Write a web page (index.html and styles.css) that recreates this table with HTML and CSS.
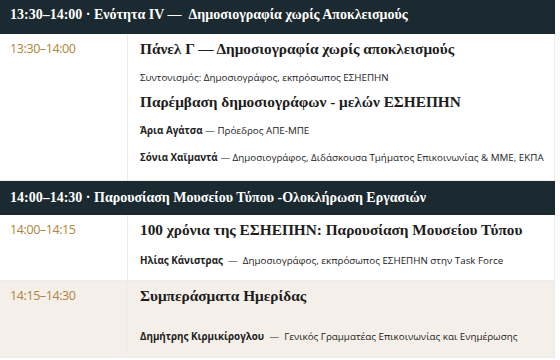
FILE: index.html
```
<!DOCTYPE html>
<html lang="el">
<head>
<meta charset="utf-8">
<link rel="stylesheet" href="styles.css">
</head>
<body>
<div class="schedule">
  <div class="band first">13:30–14:00 · Ενότητα IV —&nbsp; Δημοσιογραφία χωρίς Αποκλεισμούς</div>
  <div class="row">
    <div class="time">13:30–14:00</div>
    <div class="content pb-lg">
      <h3 class="title">Πάνελ Γ — Δημοσιογραφία χωρίς αποκλεισμούς</h3>
      <p class="line tight">Συντονισμός: Δημοσιογράφος, εκπρόσωπος ΕΣΗΕΠΗΝ</p>
      <h3 class="title">Παρέμβαση δημοσιογράφων - μελών ΕΣΗΕΠΗΝ</h3>
      <p class="line"><b>Άρια Αγάτσα</b> — Πρόεδρος ΑΠΕ-ΜΠΕ</p>
      <p class="line last"><b>Σόνια Χαϊμαντά</b> — Δημοσιογράφος, Διδάσκουσα Τμήματος Επικοινωνίας &amp; ΜΜΕ, ΕΚΠΑ</p>
    </div>
  </div>
  <div class="band">14:00–14:30 · Παρουσίαση Μουσείου Τύπου -Ολοκλήρωση Εργασιών</div>
  <div class="row">
    <div class="time">14:00–14:15</div>
    <div class="content pb-sm">
      <h3 class="title mid">100 χρόνια της ΕΣΗΕΠΗΝ: Παρουσίαση Μουσείου Τύπου</h3>
      <p class="line last"><b>Ηλίας Κάνιστρας</b> &nbsp;—&nbsp; Δημοσιογράφος, εκπρόσωπος ΕΣΗΕΠΗΝ στην Task Force</p>
    </div>
  </div>
  <div class="row alt">
    <div class="time">14:15–14:30</div>
    <div class="content">
      <h3 class="title wide">Συμπεράσματα Ημερίδας</h3>
      <p class="line last"><b>Δημήτρης Κιρμικίρογλου</b> &nbsp;—&nbsp; Γενικός Γραμματέας Επικοινωνίας και Ενημέρωσης</p>
    </div>
  </div>
</div>
</body>
</html>
```
FILE: styles.css
```
html, body {
  margin: 0;
  padding: 0;
  background: #ffffff;
}

.schedule {
  width: 555px;
  font-family: "Open Sans", "Noto Sans", sans-serif;
  color: #222;
}

.band {
  height: 34px;
  display: flex;
  align-items: center;
  padding-left: 10px;
  background: #1b2a30;
  color: #ffffff;
  font-family: "Liberation Serif", serif;
  font-size: 14px;
  font-weight: 600;
}

.band.first {
  height: 38px;
  margin-top: -4px;
}

.row {
  display: grid;
  grid-template-columns: 128px 1fr;
  border-right: 1px solid #ececec;
  border-bottom: 1px solid #ececec;
  background: #ffffff;
}

.row.alt {
  background: #f5efe9;
}

.time {
  border-right: 1px solid #ececec;
  padding: 5px 0 0 10px;
  font-family: "Open Sans", sans-serif;
  font-size: 12.5px;
  letter-spacing: -0.4px;
  line-height: 20px;
  color: #b0843a;
}

.content {
  padding: 5px 0 12px 12px;
}

.content.pb-lg {
  padding-bottom: 14px;
}

.content.pb-sm {
  padding-bottom: 11px;
}

.title {
  margin: 0 0 11px 0;
  font-family: "Liberation Serif", serif;
  font-weight: bold;
  font-size: 15.3px;
  line-height: 20px;
  color: #1d1d1d;
}

.title.mid {
  margin-bottom: 13px;
}

.title.wide {
  margin-bottom: 23px;
}

.line {
  margin: 0 0 11px 0;
  font-size: 9.8px;
  line-height: 16px;
  color: #222;
}

.line.tight {
  margin-bottom: 6px;
}

.line.last {
  margin-bottom: 0;
}

.line b {
  font-weight: 700;
}
```
